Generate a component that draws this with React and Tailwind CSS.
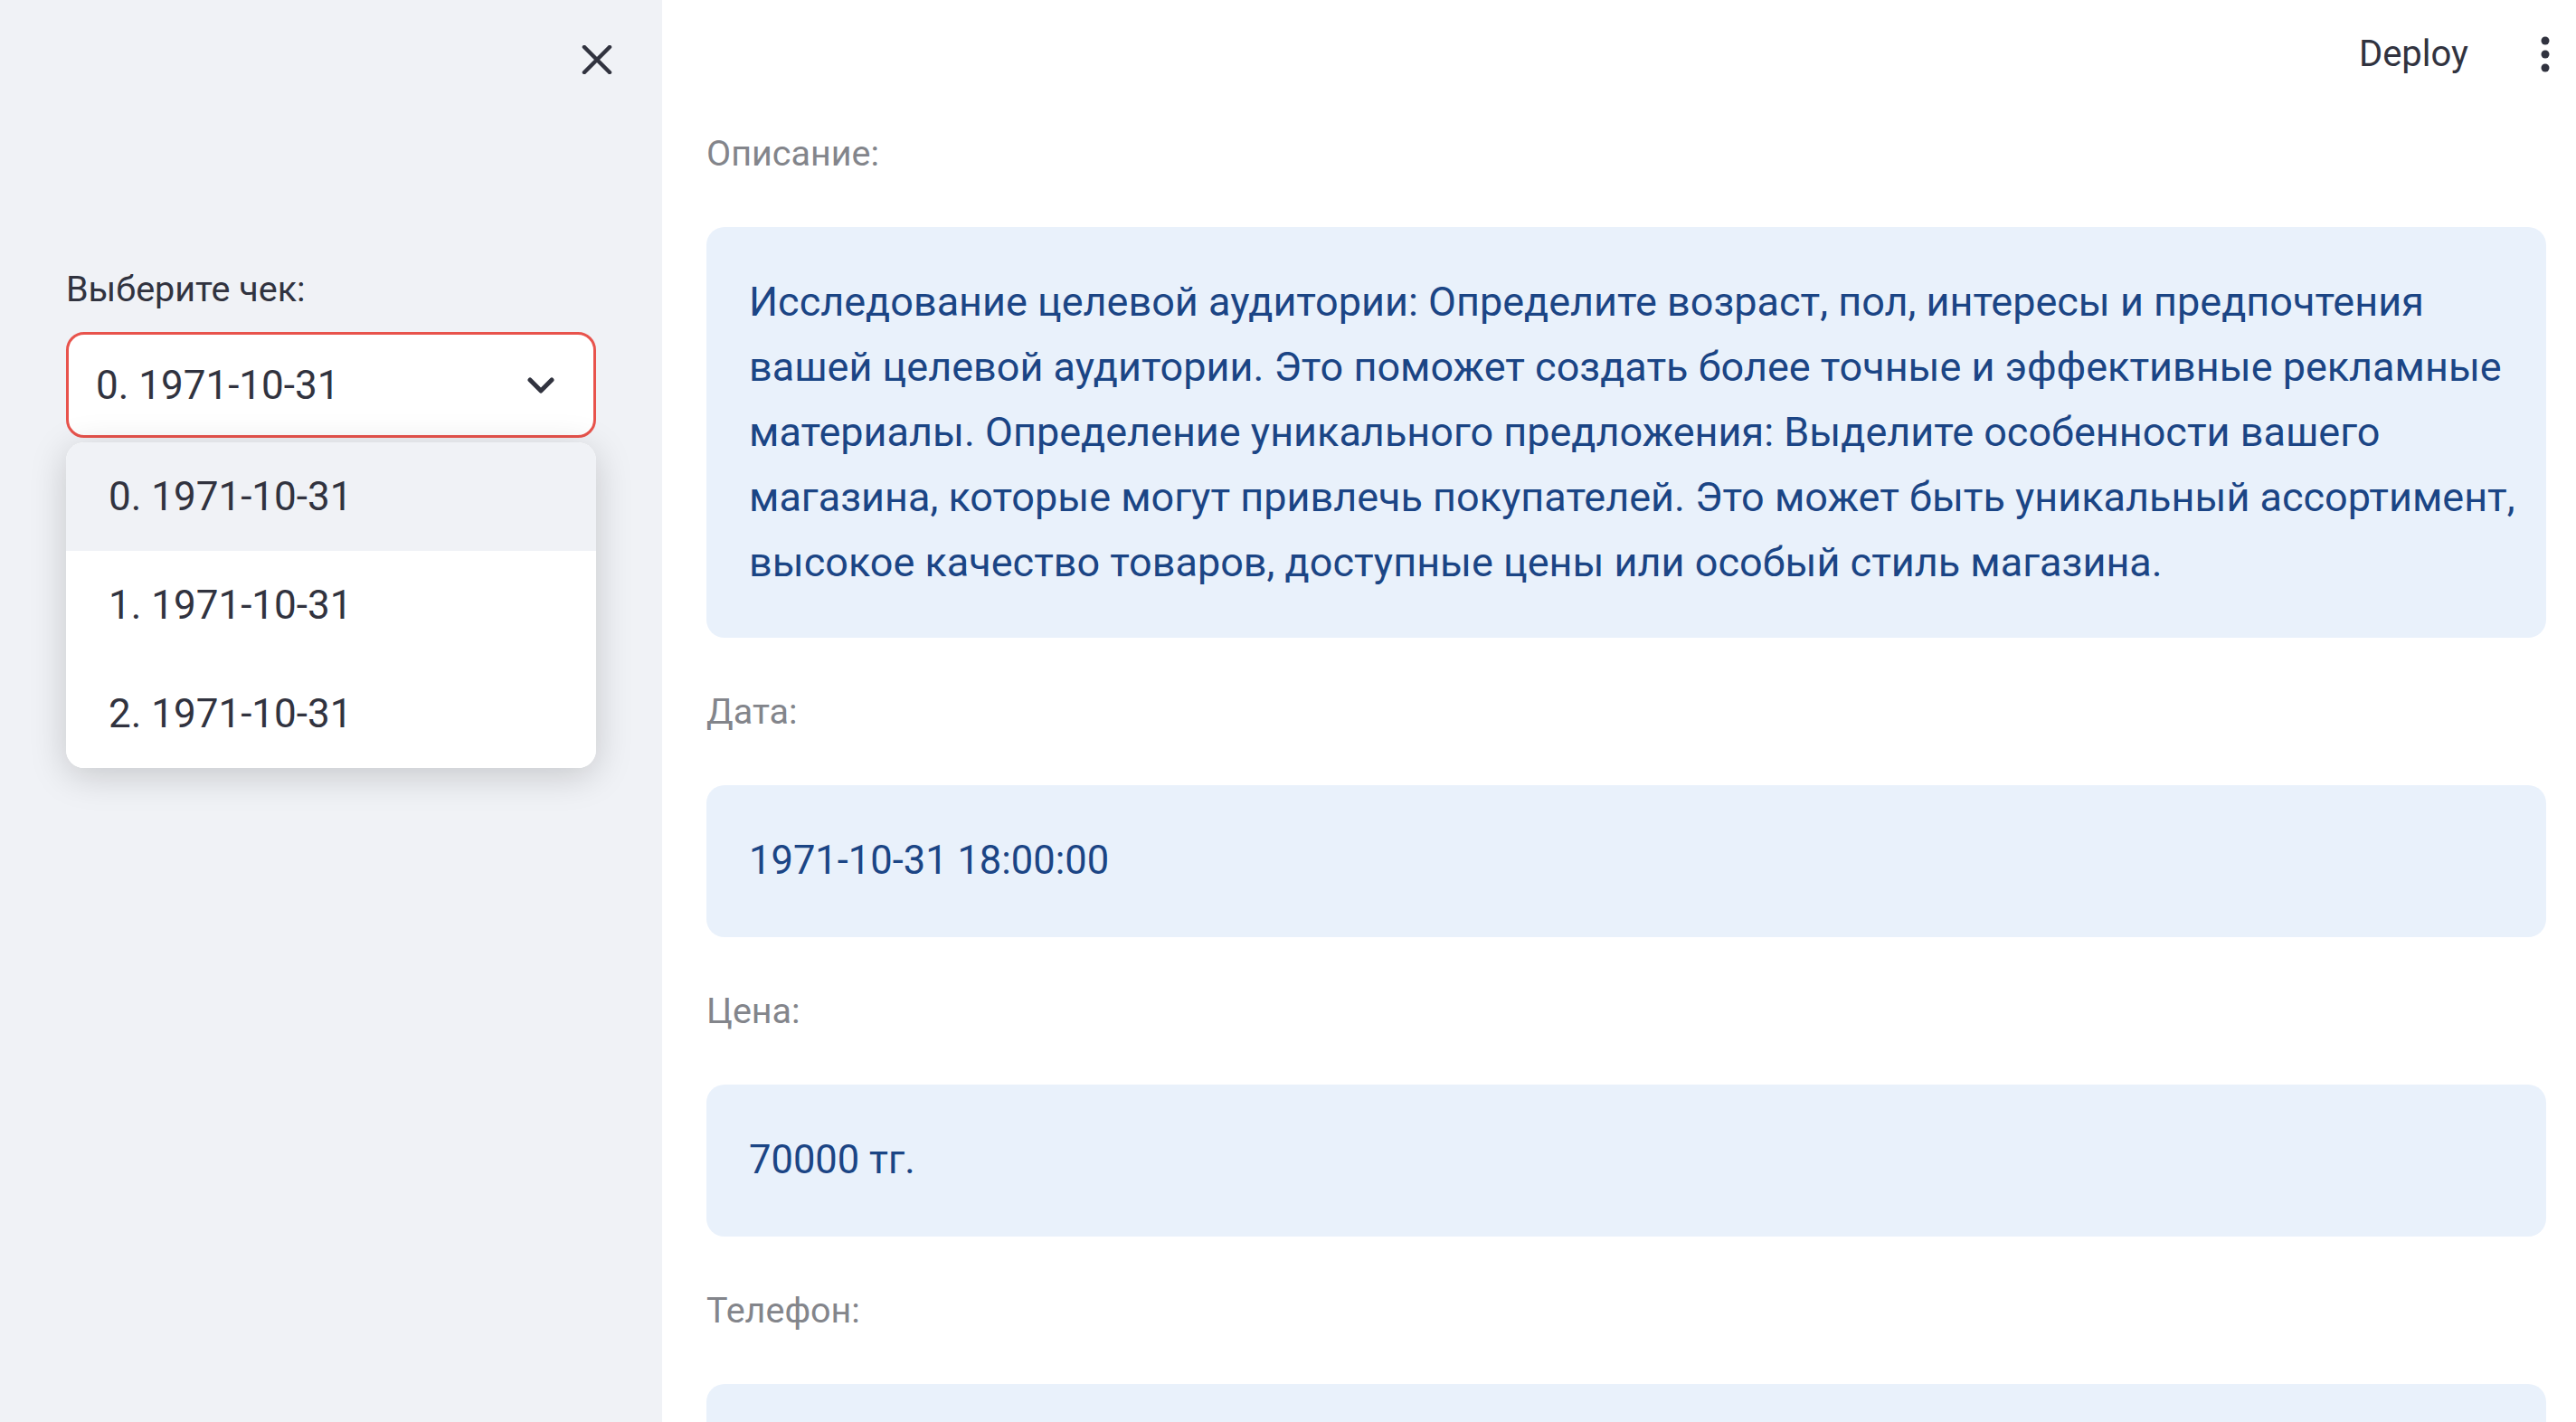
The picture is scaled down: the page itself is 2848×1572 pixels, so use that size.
import React from 'react';

const descriptionLines = [
  'Исследование целевой аудитории: Определите возраст, пол, интересы и предпочтения',
  'вашей целевой аудитории. Это поможет создать более точные и эффективные рекламные',
  'материалы. Определение уникального предложения: Выделите особенности вашего',
  'магазина, которые могут привлечь покупателей. Это может быть уникальный ассортимент,',
  'высокое качество товаров, доступные цены или особый стиль магазина.',
];

const options = ['0. 1971-10-31', '1. 1971-10-31', '2. 1971-10-31'];

// Блок "подпись + значение" в основной колонке
const Field = ({ label, children, tall }) => (
  <div>
    <p className="mt-[50px] mb-[50px] text-[39.5px] leading-[63px] text-[#83858b]">{label}</p>
    <div
      className={`rounded-[20px] bg-[#e9f1fb] px-[47px] text-[#1b4585] ${
        tall ? 'py-[47px] text-[45px] leading-[72px]' : 'flex h-[168px] items-center text-[43.5px]'
      }`}
    >
      {children}
    </div>
  </div>
);

export default function App() {
  return (
    <div className="flex h-[1572px] w-full overflow-hidden bg-white font-['Roboto',sans-serif]">
      {/* Сайдбар */}
      <aside className="w-[732px] shrink-0 bg-[#f0f2f6]">
        <div className="flex justify-end pt-[50px] pr-[55px]">
          <svg width="34" height="32" viewBox="0 0 34 32" fill="none">
            <path d="M3 2 L31 30 M31 2 L3 30" stroke="#31333f" strokeWidth="4.5" strokeLinecap="round" />
          </svg>
        </div>

        <div className="px-[73px] pt-[206px]">
          <p className="mb-[16px] text-[39.5px] leading-[63px] text-[#31333f]">Выберите чек:</p>

          <div className="relative">
            <div className="flex h-[117px] items-center justify-between rounded-[20px] border-[3px] border-[#e8534c] bg-white pl-[30px] pr-[43px]">
              <span className="text-[44px] text-[#31333f]">0. 1971-10-31</span>
              <svg width="30" height="18" viewBox="0 0 30 18" fill="none">
                <path d="M3 3 L15 15 L27 3" stroke="#31333f" strokeWidth="5" strokeLinecap="round" strokeLinejoin="round" />
              </svg>
            </div>

            {/* Выпадающий список */}
            <div className="absolute left-0 right-0 top-[122px] overflow-hidden rounded-[20px] bg-white shadow-[0_8px_40px_rgba(0,0,0,0.18)]">
              {options.map((opt, i) => (
                <div
                  key={opt}
                  className={`flex h-[120px] items-center pl-[47px] text-[44px] text-[#31333f] ${i === 0 ? 'bg-[#f0f2f6]' : 'bg-white'}`}
                >
                  {opt}
                </div>
              ))}
            </div>
          </div>
        </div>
      </aside>

      {/* Основная часть */}
      <main className="relative min-w-0 flex-1">
        <div className="absolute right-0 top-0 flex h-[120px] items-center gap-[80px] pr-[29px]">
          <span className="text-[40px] text-[#31333f]">Deploy</span>
          <svg width="10" height="40" viewBox="0 0 10 40">
            <circle cx="5" cy="5" r="4.5" fill="#31333f" />
            <circle cx="5" cy="20" r="4.5" fill="#31333f" />
            <circle cx="5" cy="35" r="4.5" fill="#31333f" />
          </svg>
        </div>

        <div className="pl-[49px] pr-[33px] pt-[88px]">
          <Field label="Описание:" tall>
            {descriptionLines.map((line) => (
              <div key={line} className="whitespace-nowrap">{line}</div>
            ))}
          </Field>
          <Field label="Дата:">1971-10-31 18:00:00</Field>
          <Field label="Цена:">70000 тг.</Field>
          <Field label="Телефон:">{' '}</Field>
        </div>
      </main>
    </div>
  );
}
